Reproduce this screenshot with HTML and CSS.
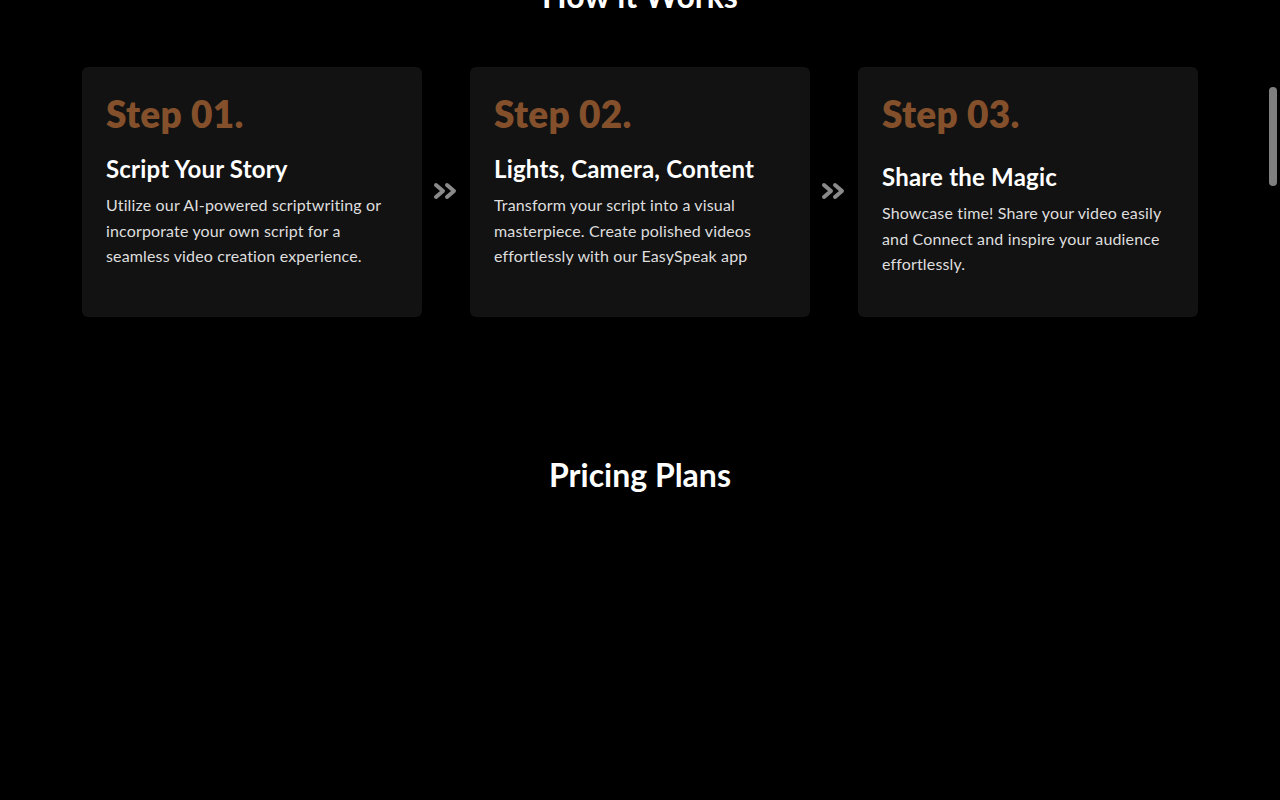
FILE: index.html
```html
<!DOCTYPE html>
<html lang="en">
<head>
<meta charset="utf-8">
<title>EasySpeak</title>
<link rel="stylesheet" href="styles.css">
</head>
<body>
<main class="page">
  <section class="how">
    <h2 class="section-title">How it Works</h2>
    <div class="steps">
      <article class="card">
        <div class="step-num">Step 01.</div>
        <h3 class="step-title">Script Your Story</h3>
        <p class="step-desc">Utilize our AI-powered scriptwriting or incorporate your own script for a seamless video creation experience.</p>
      </article>
      <div class="arrow">
        <svg width="26" height="18" viewBox="0 0 26 18"><polyline points="3,3 10,9 3,15" /><polyline points="14,3 21,9 14,15" /></svg>
      </div>
      <article class="card">
        <div class="step-num">Step 02.</div>
        <h3 class="step-title">Lights, Camera, Content</h3>
        <p class="step-desc">Transform your script into a visual masterpiece. Create polished videos effortlessly with our EasySpeak app</p>
      </article>
      <div class="arrow">
        <svg width="26" height="18" viewBox="0 0 26 18"><polyline points="3,3 10,9 3,15" /><polyline points="14,3 21,9 14,15" /></svg>
      </div>
      <article class="card">
        <div class="step-num">Step 03.</div>
        <h3 class="step-title step-title-low">Share the Magic</h3>
        <p class="step-desc">Showcase time! Share your video easily and Connect and inspire your audience effortlessly.</p>
      </article>
    </div>
  </section>
  <section class="pricing">
    <h2 class="section-title">Pricing Plans</h2>
  </section>
</main>
<div class="scrollbar"><div class="thumb"></div></div>
</body>
</html>
```

FILE: styles.css
```css
html, body {
  margin: 0;
  padding: 0;
  background: #000;
  height: 100%;
  overflow: hidden;
}
body {
  font-family: Lato, "Noto Sans", "Liberation Sans", sans-serif;
  color: #fff;
}
.page {
  margin-top: -24px;
}
.section-title {
  margin: 0;
  font-size: 32px;
  line-height: 40px;
  font-weight: 700;
  text-align: center;
  color: #fff;
}
.steps {
  margin-top: 51px;
  display: flex;
  justify-content: center;
  align-items: stretch;
}
.card {
  width: 340px;
  height: 250px;
  box-sizing: border-box;
  padding: 27px 24px 24px;
  background: #121212;
  border-radius: 6px;
}
.step-num {
  font-size: 37px;
  line-height: 40px;
  font-weight: 800;
  letter-spacing: 0.3px;
  color: #84502c;
}
.step-title {
  margin: 20px 0 0;
  font-size: 24px;
  line-height: 30px;
  font-weight: 700;
  letter-spacing: 0.2px;
  color: #fff;
}
.step-title-low {
  margin-top: 28px;
}
.step-desc {
  margin: 8px 0 0;
  font-size: 16px;
  line-height: 25.6px;
  letter-spacing: 0.15px;
  color: #dedede;
}
.arrow {
  width: 48px;
  display: flex;
  align-items: center;
  justify-content: center;
}
.arrow svg {
  margin-bottom: 2px;
}
.arrow polyline {
  fill: none;
  stroke: #8a8a8a;
  stroke-width: 4;
  stroke-linecap: round;
  stroke-linejoin: round;
}
.pricing {
  margin-top: 138px;
}
.scrollbar {
  position: fixed;
  top: 0;
  right: 0;
  width: 14px;
  height: 100%;
}
.thumb {
  position: absolute;
  top: 87px;
  left: 3px;
  width: 8px;
  height: 99px;
  border-radius: 4px;
  background: #7f7f7f;
}
```
